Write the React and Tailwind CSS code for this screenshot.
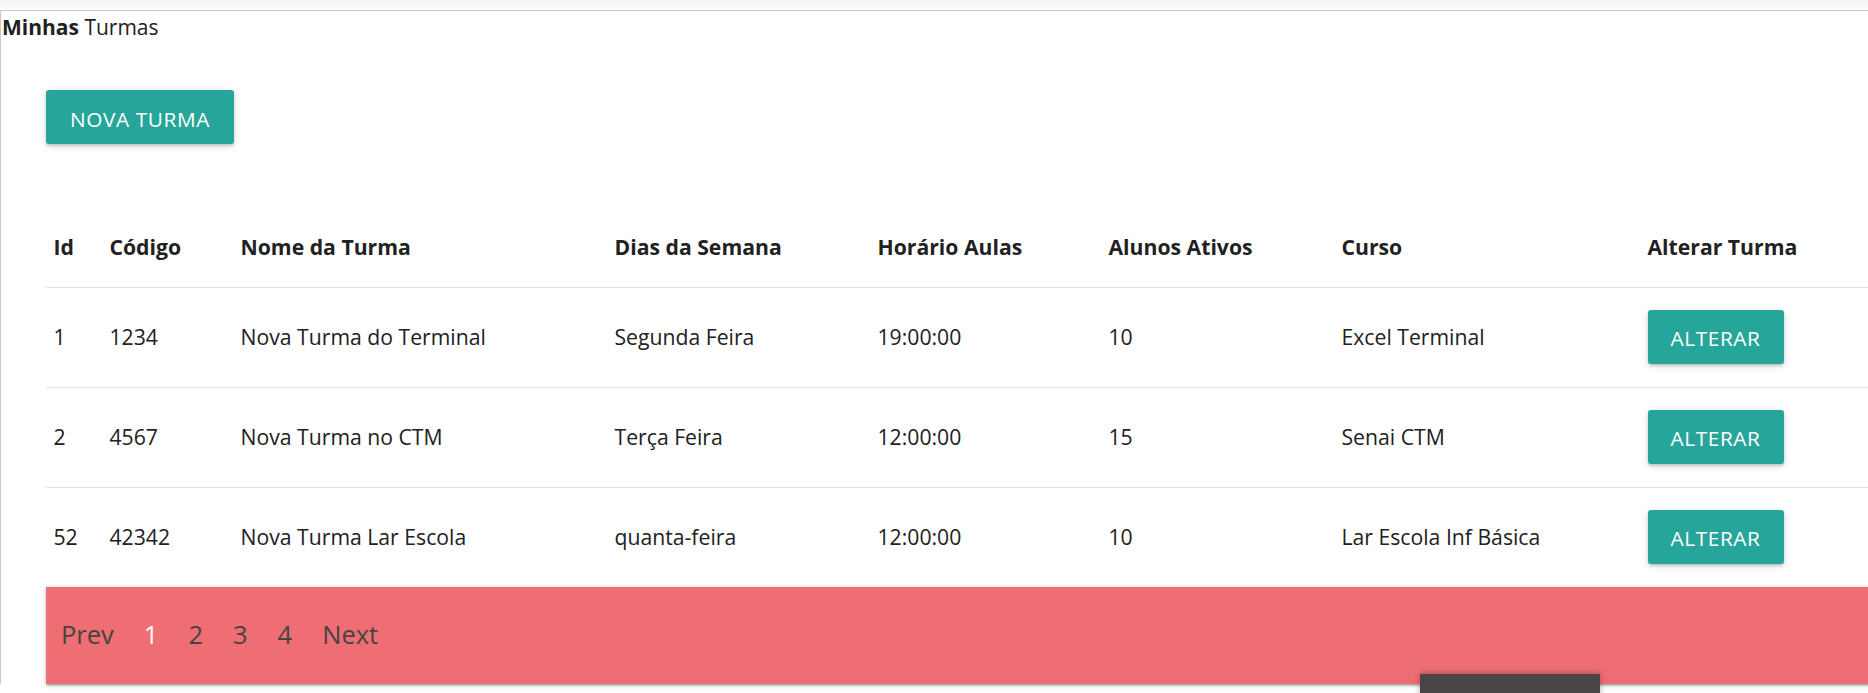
import React from "react";

const turmas = [
  { id: 1, codigo: "1234", nome: "Nova Turma do Terminal", dias: "Segunda Feira", horario: "19:00:00", alunos: 10, curso: "Excel Terminal" },
  { id: 2, codigo: "4567", nome: "Nova Turma no CTM", dias: "Terça Feira", horario: "12:00:00", alunos: 15, curso: "Senai CTM" },
  { id: 52, codigo: "42342", nome: "Nova Turma Lar Escola", dias: "quanta-feira", horario: "12:00:00", alunos: 10, curso: "Lar Escola Inf Básica" },
];

const cols = "grid grid-cols-[56px_131px_374px_263px_231px_233px_306px_1fr]";

function TealButton({ children, className = "" }) {
  return (
    <button
      className={
        "block h-[54px] whitespace-nowrap rounded-[3px] bg-[#26a69a] text-[20.8px] uppercase tracking-[0.6px] text-white shadow-[0_2px_3px_0_rgba(0,0,0,0.16),0_2px_8px_0_rgba(0,0,0,0.12)] " +
        className
      }
    >
      {children}
    </button>
  );
}

export default function App() {
  return (
    <div
      className="relative h-[693px] w-full overflow-hidden bg-white text-[21.2px] leading-[33.75px] text-[#212121]"
      style={{ fontFamily: '"Open Sans", "Noto Sans", sans-serif' }}
    >
      {/* faint shadow from bar above */}
      <div className="h-[10px] bg-gradient-to-b from-[#f5f5f5] to-[#fcfcfc]" />

      <div className="border-l border-t border-[#c9c9c9]">
        <div className="pl-[1px] text-[21px]">
          <b>Minhas</b> Turmas
        </div>

        <div className="pl-[45px] pt-[45px]">
          <TealButton className="w-[188px] pt-[7px]">Nova Turma</TealButton>

          <div className="mt-[64px] w-[1900px]">
            <div className={cols + " border-b border-[#e0e0e0] font-bold"}>
              {["Id", "Código", "Nome da Turma", "Dias da Semana", "Horário Aulas", "Alunos Ativos", "Curso", "Alterar Turma"].map((h) => (
                <div key={h} className="px-[7.5px] py-[22.5px]">
                  {h}
                </div>
              ))}
            </div>

            {turmas.map((t) => (
              <div key={t.id} className={cols + " items-center border-b border-[#e0e0e0]"}>
                <div className="px-[7.5px]">{t.id}</div>
                <div className="px-[7.5px]">{t.codigo}</div>
                <div className="px-[7.5px]">{t.nome}</div>
                <div className="px-[7.5px]">{t.dias}</div>
                <div className="px-[7.5px]">{t.horario}</div>
                <div className="px-[7.5px]">{t.alunos}</div>
                <div className="px-[7.5px]">{t.curso}</div>
                <div className="px-[7.5px] py-[22.5px]">
                  <TealButton className="w-[136px] pt-[4px]">Alterar</TealButton>
                </div>
              </div>
            ))}

            <nav className="-mt-px flex h-[97px] items-center bg-[#ee6e73] shadow-[0_2px_2px_0_rgba(0,0,0,0.14),0_3px_1px_-2px_rgba(0,0,0,0.12),0_1px_5px_0_rgba(0,0,0,0.2)]">
              <ul className="flex items-center text-[25.5px] text-[#444]">
                <li className="px-[15px]">Prev</li>
                <li className="px-[15px] text-white">1</li>
                <li className="px-[15px]">2</li>
                <li className="px-[15px]">3</li>
                <li className="px-[15px]">4</li>
                <li className="px-[15px]">Next</li>
              </ul>
            </nav>
          </div>
        </div>
      </div>

      {/* toast peeking from the bottom */}
      <div className="absolute left-[1420px] top-[674px] h-[40px] w-[180px] bg-[#4c4545] shadow-[0_-1px_6px_rgba(0,0,0,0.3)]" />
    </div>
  );
}
